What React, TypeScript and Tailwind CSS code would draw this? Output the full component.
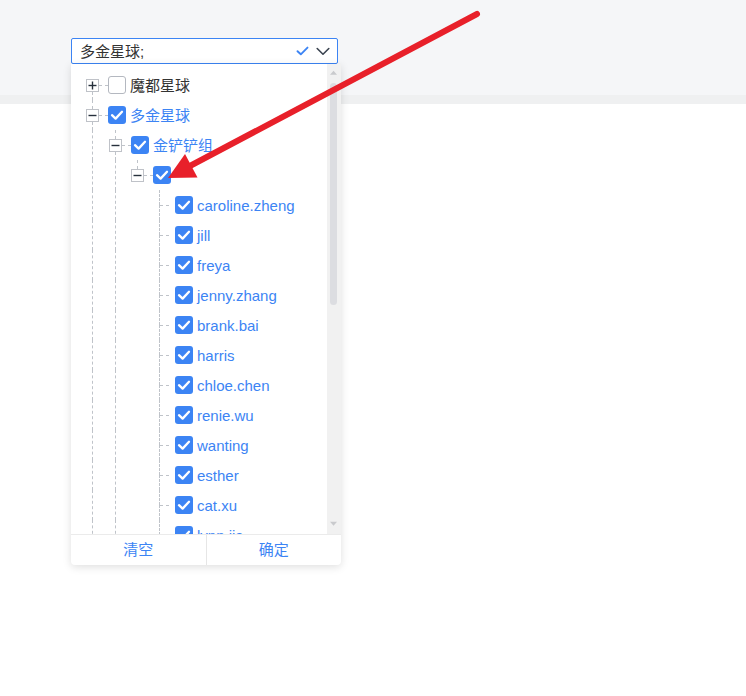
import React from "react";

const BLUE = "#3c84f4";

type SwitchKind = "plus" | "minus" | "leaf";

type RowDef = {
  guides: boolean[];
  kind: SwitchKind;
  top: boolean;
  bottom: boolean;
  checked: boolean;
  label: string;
};

function Check() {
  return (
    <svg width="18" height="18" viewBox="0 0 18 18">
      <path d="M4 9.2 L7.6 12.6 L14 5.8" fill="none" stroke="white" strokeWidth="2.3" strokeLinecap="round" strokeLinejoin="round" />
    </svg>
  );
}

function Checkbox({ checked }: { checked: boolean }) {
  if (checked) {
    return (
      <div className="w-[18px] h-[18px] rounded-[3px] bg-[#3c84f4] shrink-0 flex items-center justify-center">
        <Check />
      </div>
    );
  }
  return <div className="w-[18px] h-[18px] rounded-[3px] bg-white border border-[#b4b8c0] shrink-0" />;
}

function VLine({ show, h }: { show: boolean; h: string }) {
  return <div className={`${h} w-0 ml-[6px] ${show ? "border-l border-dashed border-[#bfc3c9]" : ""}`} />;
}

function Expander({ kind }: { kind: "plus" | "minus" }) {
  return (
    <div className="w-[13px] h-[13px] border border-[#bfc2c8] bg-white flex items-center justify-center">
      <svg width="11" height="11" viewBox="0 0 11 11">
        <path d="M1.5 5.5 H9.5" stroke="#26303c" strokeWidth="1.4" />
        {kind === "plus" && <path d="M5.5 1.5 V9.5" stroke="#26303c" strokeWidth="1.4" />}
      </svg>
    </div>
  );
}

function Row({ r }: { r: RowDef }) {
  return (
    <div className="flex h-[30px] items-stretch">
      {r.guides.map((g, i) => (
        <div key={i} className={`${i === 0 ? "w-[23px]" : "w-[22px]"} shrink-0 flex`}>
          {g && <div className="h-full w-0 ml-[6px] border-l border-dashed border-[#bfc3c9]" />}
        </div>
      ))}
      {r.kind === "leaf" ? (
        <div className="w-[22px] shrink-0 flex">
          <div className="w-[13px] flex flex-col">
            <VLine show={r.top} h="h-[15px]" />
            <VLine show={r.bottom} h="h-[15px]" />
          </div>
          <div className="flex-1 flex items-center">
            <div className="w-full h-0 border-t border-dashed border-[#bfc3c9] -ml-[6px]" />
          </div>
        </div>
      ) : (
        <div className="w-[22px] shrink-0 flex items-center">
          <div className="w-[13px] flex flex-col">
            <VLine show={r.top} h="h-[9px]" />
            <Expander kind={r.kind} />
            <VLine show={r.bottom} h="h-[8px]" />
          </div>
          <div className="w-[9px] h-0 border-t border-dashed border-[#bfc3c9]" />
        </div>
      )}
      <div className="flex items-center">
        <Checkbox checked={r.checked} />
        <span className={`ml-[4px] text-[15px] leading-none whitespace-nowrap ${r.checked ? "text-[#3c84f4]" : "text-[#333333]"}`}>
          {r.label}
        </span>
      </div>
    </div>
  );
}

const leaves = [
  "caroline.zheng",
  "jill",
  "freya",
  "jenny.zhang",
  "brank.bai",
  "harris",
  "chloe.chen",
  "renie.wu",
  "wanting",
  "esther",
  "cat.xu",
  "lynn.jia",
];

const rows: RowDef[] = [
  { guides: [], kind: "plus", top: false, bottom: true, checked: false, label: "魔都星球" },
  { guides: [], kind: "minus", top: true, bottom: true, checked: true, label: "多金星球" },
  { guides: [true], kind: "minus", top: true, bottom: true, checked: true, label: "金铲铲组" },
  { guides: [true, true], kind: "minus", top: true, bottom: false, checked: true, label: "" },
  ...leaves.map((l) => ({ guides: [true, true, false], kind: "leaf" as SwitchKind, top: true, bottom: true, checked: true, label: l })),
];

export default function App() {
  return (
    <div className="relative w-[746px] h-[696px] bg-white overflow-hidden font-['Liberation_Sans','Noto_Sans_CJK_SC',sans-serif]">
      <div className="h-[95px] bg-[#f5f6f8] pt-[38px] pl-[71px]">
        <div className="relative w-[267px]">
          <div className="h-[26px] w-[267px] border border-[#3c84f4] rounded-[2px] bg-white flex items-center pl-[8px] pr-[7px]">
            <span className="text-[15px] text-[#333333] leading-none flex-1">多金星球;</span>
            <svg width="13" height="10" viewBox="0 0 13 10" className="mr-[7px]">
              <path d="M1.5 5.2 L4.8 8.3 L11.5 1.6" fill="none" stroke={BLUE} strokeWidth="1.9" strokeLinecap="round" strokeLinejoin="round" />
            </svg>
            <svg width="14" height="9" viewBox="0 0 14 9">
              <path d="M1.2 1.5 L7 7.2 L12.8 1.5" fill="none" stroke="#3a4350" strokeWidth="1.6" strokeLinecap="round" strokeLinejoin="round" />
            </svg>
          </div>
          <div className="absolute top-[26px] left-0 w-[270px] h-[501px] bg-white rounded-b-[4px] shadow-[0_2px_8px_rgba(0,0,0,0.13)] flex flex-col z-10">
            <div className="flex h-[470px]">
              <div className="flex-1 overflow-hidden pt-[6px] pl-[15px]">
                {rows.map((r, i) => (
                  <Row key={i} r={r} />
                ))}
              </div>
              <div className="w-[14px] bg-[#f1f1f1] flex flex-col pl-[3px] pr-[4px]">
                <div className="h-[17px] flex items-center justify-center">
                  <svg width="8" height="6" viewBox="0 0 8 6">
                    <path d="M0 5 L4 0.5 L8 5 Z" fill="#c9cacd" />
                  </svg>
                </div>
                <div className="flex-1">
                  <div className="mt-[2px] h-[222px] w-[7px] rounded-full bg-[#dcdde1]" />
                </div>
                <div className="h-[17px] flex items-start justify-center pt-[4px]">
                  <svg width="8" height="6" viewBox="0 0 8 6">
                    <path d="M0 0.5 L8 0.5 L4 5 Z" fill="#c9cacd" />
                  </svg>
                </div>
              </div>
            </div>
            <div className="flex h-[31px] border-t border-[#ebebeb]">
              <div className="flex-1 flex items-center justify-center text-[15px] text-[#3c84f4] border-r border-[#e6e6e6]">清空</div>
              <div className="flex-1 flex items-center justify-center text-[15px] text-[#3c84f4]">确定</div>
            </div>
          </div>
        </div>
      </div>
      <div className="h-[9px] bg-[#eff0f1]" />
      <svg className="absolute inset-0 pointer-events-none z-20" width="746" height="696" viewBox="0 0 746 696">
        <line x1="477" y1="14" x2="188" y2="167" stroke="#e8202a" strokeWidth="6" strokeLinecap="round" />
        <polygon points="168,178 197.5,177.5 185,154" fill="#e8202a" />
      </svg>
    </div>
  );
}
